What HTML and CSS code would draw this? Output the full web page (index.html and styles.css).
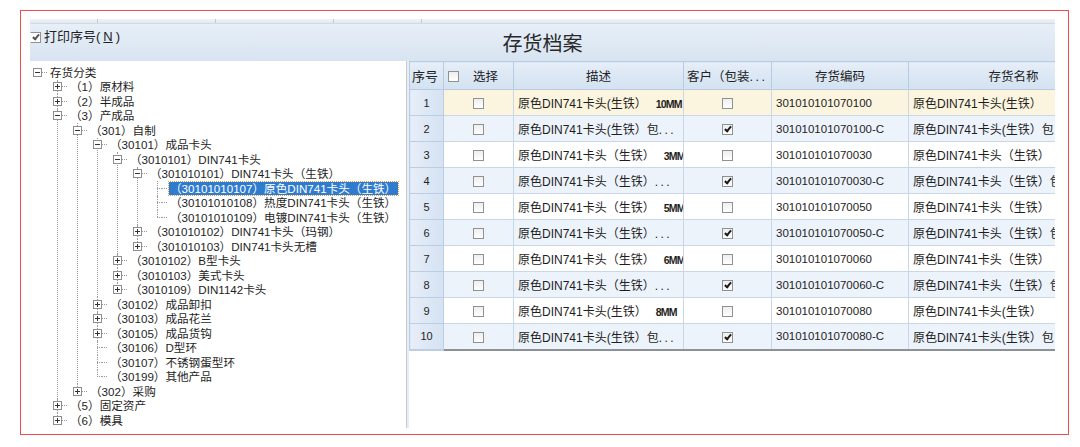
FILE: index.html
```html
<!DOCTYPE html>
<html lang="zh-CN">
<head>
  <meta charset="UTF-8" />
  <title>存货档案</title>
  <link rel="stylesheet" href="styles.css">
</head>
<body>

  <div class="frame">
    <div class="strip">
      <span style="width: 67px"></span>
      <span style="width: 117px"></span>
      <span style="width: 117px"></span>
      <span style="width: 87px"></span>
    </div>

    <div class="toolbar">
      <label class="print"><span class="cb on"></span>打印序号(<u>N</u>)</label>
      <div class="title">存货档案</div>
      <div></div>
    </div>

    <div class="main">
      <!-- category tree -->
      <div class="tree-pane">
        <ul class="tree">
          <li><div class="node"><span class="twist minus"></span><span class="dash"></span><span class="label">存货分类</span></div>
            <ul>
              <li><div class="node"><span class="twist plus"></span><span class="dash"></span><span class="label">（1）原材料</span></div></li>
              <li><div class="node"><span class="twist plus"></span><span class="dash"></span><span class="label">（2）半成品</span></div></li>
              <li><div class="node"><span class="twist minus"></span><span class="dash"></span><span class="label">（3）产成品</span></div>
                <ul>
                  <li><div class="node"><span class="twist minus"></span><span class="dash"></span><span class="label">（301）自制</span></div>
                    <ul>
                      <li><div class="node"><span class="twist minus"></span><span class="dash"></span><span class="label">（30101）成品卡头</span></div>
                        <ul>
                          <li><div class="node"><span class="twist minus"></span><span class="dash"></span><span class="label">（3010101）DIN741卡头</span></div>
                            <ul>
                              <li><div class="node"><span class="twist minus"></span><span class="dash"></span><span class="label">（301010101）DIN741卡头（生铁）</span></div>
                                <ul>
                                  <li><div class="node"><span class="twist leaf"></span><span class="dash"></span><span class="label selected">（30101010107）原色DIN741卡头（生铁）</span></div></li>
                                  <li><div class="node"><span class="twist leaf"></span><span class="dash"></span><span class="label">（30101010108）热度DIN741卡头（生铁）</span></div></li>
                                  <li><div class="node"><span class="twist leaf"></span><span class="dash"></span><span class="label">（30101010109）电镀DIN741卡头（生铁）</span></div></li>
                                </ul>
                              </li>
                              <li><div class="node"><span class="twist plus"></span><span class="dash"></span><span class="label">（301010102）DIN741卡头（玛钢）</span></div></li>
                              <li><div class="node"><span class="twist plus"></span><span class="dash"></span><span class="label">（301010103）DIN741卡头无槽</span></div></li>
                            </ul>
                          </li>
                          <li><div class="node"><span class="twist plus"></span><span class="dash"></span><span class="label">（3010102）B型卡头</span></div></li>
                          <li><div class="node"><span class="twist plus"></span><span class="dash"></span><span class="label">（3010103）美式卡头</span></div></li>
                          <li><div class="node"><span class="twist plus"></span><span class="dash"></span><span class="label">（3010109）DIN1142卡头</span></div></li>
                        </ul>
                      </li>
                      <li><div class="node"><span class="twist plus"></span><span class="dash"></span><span class="label">（30102）成品卸扣</span></div></li>
                      <li><div class="node"><span class="twist plus"></span><span class="dash"></span><span class="label">（30103）成品花兰</span></div></li>
                      <li><div class="node"><span class="twist plus"></span><span class="dash"></span><span class="label">（30105）成品货钩</span></div></li>
                      <li><div class="node"><span class="twist leaf"></span><span class="dash"></span><span class="label">（30106）D型环</span></div></li>
                      <li><div class="node"><span class="twist leaf"></span><span class="dash"></span><span class="label">（30107）不锈钢蛋型环</span></div></li>
                      <li><div class="node"><span class="twist leaf"></span><span class="dash"></span><span class="label">（30199）其他产品</span></div></li>
                    </ul>
                  </li>
                  <li><div class="node"><span class="twist plus"></span><span class="dash"></span><span class="label">（302）采购</span></div></li>
                </ul>
              </li>
              <li><div class="node"><span class="twist plus"></span><span class="dash"></span><span class="label">（5）固定资产</span></div></li>
              <li><div class="node"><span class="twist plus"></span><span class="dash"></span><span class="label">（6）模具</span></div></li>
            </ul>
          </li>
        </ul>
      </div>

      <!-- inventory grid -->
      <div class="grid-pane">
        <table class="grid">
          <colgroup>
            <col style="width: 34px">
            <col style="width: 70px">
            <col style="width: 170px">
            <col style="width: 88px">
            <col style="width: 137px">
            <col style="width: 210px">
          </colgroup>
          <thead>
            <tr>
              <th class="seq">序号</th>
              <th class="sel"><span class="cb"></span>选择</th>
              <th>描述</th>
              <th class="cust">客户（包装<span class="dots">...</span></th>
              <th>存货编码</th>
              <th>存货名称</th>
            </tr>
          </thead>
          <tbody>
            <tr class="cur">
              <td class="seq">1</td><td class="chk"><span class="cb"></span></td>
              <td>原色DIN741卡头(生铁）<span class="mm">10MM</span></td>
              <td class="chk"><span class="cb"></span></td>
              <td class="code">301010101070100</td><td>原色DIN741卡头(生铁）</td>
            </tr>
            <tr class="even">
              <td class="seq">2</td><td class="chk"><span class="cb"></span></td>
              <td>原色DIN741卡头(生铁）包<span class="dots">...</span></td>
              <td class="chk"><span class="cb on"></span></td>
              <td class="code">301010101070100-C</td><td>原色DIN741卡头(生铁）包</td>
            </tr>
            <tr>
              <td class="seq">3</td><td class="chk"><span class="cb"></span></td>
              <td>原色DIN741卡头（生铁）<span class="mm">3MM</span></td>
              <td class="chk"><span class="cb"></span></td>
              <td class="code">301010101070030</td><td>原色DIN741卡头（生铁）</td>
            </tr>
            <tr class="even">
              <td class="seq">4</td><td class="chk"><span class="cb"></span></td>
              <td>原色DIN741卡头（生铁）<span class="dots">...</span></td>
              <td class="chk"><span class="cb on"></span></td>
              <td class="code">301010101070030-C</td><td>原色DIN741卡头（生铁）包</td>
            </tr>
            <tr>
              <td class="seq">5</td><td class="chk"><span class="cb"></span></td>
              <td>原色DIN741卡头（生铁）<span class="mm">5MM</span></td>
              <td class="chk"><span class="cb"></span></td>
              <td class="code">301010101070050</td><td>原色DIN741卡头（生铁）</td>
            </tr>
            <tr class="even">
              <td class="seq">6</td><td class="chk"><span class="cb"></span></td>
              <td>原色DIN741卡头（生铁）<span class="dots">...</span></td>
              <td class="chk"><span class="cb on"></span></td>
              <td class="code">301010101070050-C</td><td>原色DIN741卡头（生铁）包</td>
            </tr>
            <tr>
              <td class="seq">7</td><td class="chk"><span class="cb"></span></td>
              <td>原色DIN741卡头（生铁）<span class="mm">6MM</span></td>
              <td class="chk"><span class="cb"></span></td>
              <td class="code">301010101070060</td><td>原色DIN741卡头（生铁）</td>
            </tr>
            <tr class="even">
              <td class="seq">8</td><td class="chk"><span class="cb"></span></td>
              <td>原色DIN741卡头（生铁）<span class="dots">...</span></td>
              <td class="chk"><span class="cb on"></span></td>
              <td class="code">301010101070060-C</td><td>原色DIN741卡头（生铁）包</td>
            </tr>
            <tr>
              <td class="seq">9</td><td class="chk"><span class="cb"></span></td>
              <td>原色DIN741卡头(生铁）<span class="mm">8MM</span></td>
              <td class="chk"><span class="cb"></span></td>
              <td class="code">301010101070080</td><td>原色DIN741卡头(生铁）</td>
            </tr>
            <tr class="even">
              <td class="seq">10</td><td class="chk"><span class="cb"></span></td>
              <td>原色DIN741卡头(生铁）包<span class="dots">...</span></td>
              <td class="chk"><span class="cb on"></span></td>
              <td class="code">301010101070080-C</td><td>原色DIN741卡头(生铁）包</td>
            </tr>
          </tbody>
        </table>
      </div>
    </div>
  </div>

</body>
</html>
```

FILE: styles.css
```css
body {
  margin: 0;
  background: #fff;
  font-family: "Liberation Sans", "Noto Sans CJK SC", sans-serif;
  font-size: 12px;
  color: #1e1e1e;
}

.frame {
  box-sizing: border-box;
  width: 1049px;
  height: 425px;
  margin: 10px 0 0 20px;
  border: 1px solid #f24b4b;
  padding: 8px 13px 6px 9px;
  display: flex;
  flex-direction: column;
}

.strip {
  height: 4px;
  display: flex;
  flex-shrink: 0;
  background: linear-gradient(#f1f4f7, #e2e8ef);
}

.strip span {
  border-right: 1px solid #c3cad3;
}

.toolbar {
  box-sizing: border-box;
  height: 38px;
  flex-shrink: 0;
  display: grid;
  grid-template-columns: 1fr auto 1fr;
  align-items: start;
  background: linear-gradient(#e7eff8, #d8e4f1);
  border-top: 1px solid #cfdbe8;
}

.print {
  display: flex;
  align-items: center;
  gap: 3px;
  margin-top: 5px;
  font-size: 13px;
  line-height: 16px;
  color: #222;
}

.print .cb {
  border-left-color: transparent;
  background: #fff;
}

.print .cb.on::after {
  border-color: #555;
}

.title {
  margin-top: 7px;
  font-size: 20px;
  line-height: 26px;
  color: #2a2a2a;
}

/* checkboxes */
.cb {
  box-sizing: border-box;
  display: inline-flex;
  align-items: center;
  justify-content: center;
  width: 11px;
  height: 11px;
  border: 1px solid #8f9193;
  background: linear-gradient(#eeeeee, #ffffff);
  vertical-align: middle;
}

.cb.on::after {
  content: "";
  width: 2px;
  height: 5px;
  margin-top: -2px;
  border: solid #1a1a1a;
  border-width: 0 2px 2px 0;
  transform: rotate(40deg);
}

.main {
  flex: 1;
  display: flex;
  min-height: 0;
}

/* tree */
.tree-pane {
  box-sizing: border-box;
  width: 377px;
  padding: 4px 0 0 3px;
  background: #fff;
  border-right: 1px solid #c9c9c9;
  overflow: hidden;
  font-size: 11.6px;
}

.tree, .tree ul {
  list-style: none;
  margin: 0;
  padding: 0;
}

.tree ul {
  padding-left: 20px;
}

.tree li {
  position: relative;
}

.tree ul > li::before {
  content: "";
  position: absolute;
  left: 4px;
  top: 0;
  bottom: 0;
  border-left: 1px dotted #9a9a9a;
}

.tree ul > li:last-child::before {
  bottom: auto;
  height: 7px;
}

.node {
  display: flex;
  align-items: center;
  height: 14.5px;
  white-space: nowrap;
}

.twist {
  position: relative;
  box-sizing: border-box;
  width: 9px;
  height: 9px;
  flex-shrink: 0;
}

.twist.plus, .twist.minus {
  border: 1px solid #8e8e8e;
  background-color: #fff;
  background-repeat: no-repeat;
  background-position: center;
}

.twist.minus {
  background-image: linear-gradient(#333, #333);
  background-size: 5px 1px;
}

.twist.plus {
  background-image: linear-gradient(#333, #333), linear-gradient(#333, #333);
  background-size: 5px 1px, 1px 5px;
}

.twist.leaf {
  margin-left: 4px;
  width: 5px;
  height: 1px;
  border-top: 1px dotted #9a9a9a;
}

.dash {
  width: 5px;
  height: 0;
  border-top: 1px dotted #9a9a9a;
  margin-right: 2px;
}

.label {
  line-height: 13px;
  padding: 0 2px 0 1px;
}

.label.selected {
  background: #2f7ccf;
  color: #fff;
  outline: 1px dotted #d9a24a;
}

/* grid */
.grid-pane {
  flex: 1;
  overflow: hidden;
  border-left: 2px solid #e6edf6;
  background: #fff;
}

.grid {
  border-collapse: collapse;
  table-layout: fixed;
  width: 709px;
}

.grid thead tr {
  height: 28px;
}

.grid tbody tr {
  height: 26px;
}

.grid th {
  font-weight: normal;
  font-size: 12.5px;
  color: #222;
  background: linear-gradient(#e5eef8, #d3e1f1);
  border: 1px solid #b8cbe2;
  white-space: nowrap;
  overflow: hidden;
}

.grid th.seq {
  text-align: left;
  padding-left: 2px;
  font-size: 13px;
}

.grid th.sel {
  text-align: left;
  padding-left: 4px;
}

.grid th.sel .cb {
  margin: -2px 14px 0 0;
}

.grid th.cust {
  text-align: left;
  padding-left: 3px;
}

.dots {
  letter-spacing: 2.5px;
}

.grid td {
  border: 1px solid #c9d7e8;
  padding: 0 4px;
  white-space: nowrap;
  overflow: hidden;
  background: #fff;
}

.grid tr.even td {
  background: #edf3fb;
}

.grid tr.cur td {
  background: #fbf5df;
}

.grid td.seq,
.grid tr.even td.seq,
.grid tr.cur td.seq {
  text-align: center;
  font-size: 11px;
  background: linear-gradient(90deg, #e6eef8, #d5e2f2);
  border-color: #bccee4;
}

.grid td.chk {
  text-align: center;
}

.grid td.code {
  font-size: 11.5px;
}

.mm {
  margin-left: 9px;
  font-size: 10.5px;
  font-weight: bold;
  letter-spacing: -0.8px;
}

.grid tbody tr:last-child td {
  border-bottom: 2px solid #8d9299;
}
```
